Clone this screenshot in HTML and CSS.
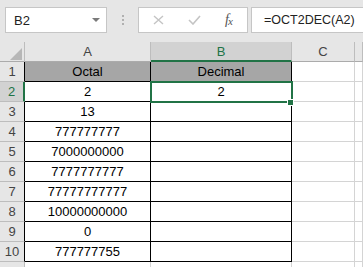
FILE: index.html
```html
<!DOCTYPE html>
<html lang="en">
<head>
    <meta charset="UTF-8">
    <title>OCT2DEC</title>
    <link rel="stylesheet" href="styles.css">
</head>
<body>
    <div class="toolbar">
        <div class="name-box">
            <span>B2</span>
            <span class="drop"></span>
        </div>
        <div class="grip"><i></i><i></i><i></i></div>
        <div class="fx-box">
            <svg class="icon-x" width="11" height="10" viewBox="0 0 11 10">
                <path d="M1 1 L10 9 M10 1 L1 9" stroke="#c4c4c4" stroke-width="1.4" fill="none"/>
            </svg>
            <svg class="icon-check" width="13" height="10" viewBox="0 0 13 10">
                <path d="M1 5 L5 9 L12 1" stroke="#c4c4c4" stroke-width="1.6" fill="none"/>
            </svg>
            <span class="fx">f<sub>x</sub></span>
        </div>
        <div class="formula">=OCT2DEC(A2)</div>
    </div>

    <div class="sheet">
        <div class="corner"><span class="tri"></span></div>
        <div class="col-head">A</div>
        <div class="col-head active">B</div>
        <div class="col-head">C</div>
        <div class="col-head"></div>

        <div class="row-head">1</div>
        <div class="cell tbl title">Octal</div>
        <div class="cell tbl title">Decimal</div>
        <div class="cell"></div>
        <div class="cell"></div>

        <div class="row-head active">2</div>
        <div class="cell tbl">2</div>
        <div class="cell tbl">2</div>
        <div class="cell"></div>
        <div class="cell"></div>

        <div class="row-head">3</div>
        <div class="cell tbl">13</div>
        <div class="cell tbl"></div>
        <div class="cell"></div>
        <div class="cell"></div>

        <div class="row-head">4</div>
        <div class="cell tbl">777777777</div>
        <div class="cell tbl"></div>
        <div class="cell"></div>
        <div class="cell"></div>

        <div class="row-head">5</div>
        <div class="cell tbl">7000000000</div>
        <div class="cell tbl"></div>
        <div class="cell"></div>
        <div class="cell"></div>

        <div class="row-head">6</div>
        <div class="cell tbl">7777777777</div>
        <div class="cell tbl"></div>
        <div class="cell"></div>
        <div class="cell"></div>

        <div class="row-head">7</div>
        <div class="cell tbl">77777777777</div>
        <div class="cell tbl"></div>
        <div class="cell"></div>
        <div class="cell"></div>

        <div class="row-head">8</div>
        <div class="cell tbl">10000000000</div>
        <div class="cell tbl"></div>
        <div class="cell"></div>
        <div class="cell"></div>

        <div class="row-head">9</div>
        <div class="cell tbl">0</div>
        <div class="cell tbl"></div>
        <div class="cell"></div>
        <div class="cell"></div>

        <div class="row-head">10</div>
        <div class="cell tbl">777777755</div>
        <div class="cell tbl"></div>
        <div class="cell"></div>
        <div class="cell"></div>

        <div class="row-head plain"></div>
        <div class="cell"></div>
        <div class="cell"></div>
        <div class="cell"></div>
        <div class="cell"></div>

        <div class="selection"><span class="handle"></span></div>
    </div>
</body>
</html>
```

FILE: styles.css
```css
html, body {
    margin: 0;
    padding: 0;
    background: #fff;
    font-family: 'Liberation Sans', Arial, sans-serif;
    overflow: hidden;
}

/* Formula bar */
.toolbar {
    display: flex;
    align-items: flex-start;
    height: 42px;
    padding: 7px 0 0 5px;
    box-sizing: border-box;
    background: #e6e6e6;
}

.name-box {
    display: flex;
    align-items: center;
    justify-content: space-between;
    width: 102px;
    height: 26px;
    box-sizing: border-box;
    padding: 0 6px 0 8px;
    background: #fff;
    border: 1px solid #c6c6c6;
    font-size: 13px;
    color: #222;
}

.drop {
    width: 0;
    height: 0;
    border-left: 4px solid transparent;
    border-right: 4px solid transparent;
    border-top: 4px solid #7a7a7a;
}

.grip {
    display: flex;
    flex-direction: column;
    gap: 2px;
    width: 31px;
    align-items: center;
    padding-top: 8px;
}

.grip i {
    display: block;
    width: 2px;
    height: 2px;
    background: #b0b0b0;
}

.fx-box {
    display: flex;
    align-items: center;
    width: 110px;
    height: 26px;
    box-sizing: border-box;
    padding-left: 14px;
    background: #fff;
    border: 1px solid #c6c6c6;
}

.icon-check {
    margin-left: 24px;
}

.fx {
    margin-left: 24px;
    font-family: 'Liberation Serif', serif;
    font-style: italic;
    font-size: 14px;
    color: #555;
    letter-spacing: -1px;
}

.fx sub {
    font-size: 11px;
    vertical-align: -1px;
}

.formula {
    flex: 1;
    height: 26px;
    margin-left: 3px;
    box-sizing: border-box;
    padding: 5px 0 0 12px;
    background: #fff;
    border: 1px solid #c6c6c6;
    border-right: none;
    font-size: 12.5px;
    color: #222;
}

/* Grid */
.sheet {
    position: relative;
    display: grid;
    grid-template-columns: 25px 126px 141px 63px 1fr;
    grid-auto-rows: 20px;
    font-size: 13px;
    color: #000;
}

.corner, .col-head, .row-head {
    background: #e6e6e6;
    color: #444;
    display: flex;
    align-items: center;
    justify-content: center;
    box-sizing: border-box;
    border-right: 1px solid #bdbdbd;
    border-bottom: 1px solid #ababab;
}

.corner {
    position: relative;
}

.tri {
    width: 0;
    height: 0;
    margin: 4px 0 0 8px;
    border-left: 12px solid transparent;
    border-bottom: 12px solid #b7b7b7;
}

.col-head.active {
    background: #d2d2d2;
    color: #217346;
    border-bottom: 2px solid #217346;
}

.row-head {
    border-bottom-color: #bdbdbd;
    border-right-color: #000;
}

.row-head.plain {
    border-right-color: #bdbdbd;
}

.row-head.active {
    background: #d2d2d2;
    color: #217346;
    border-right: 2px solid #217346;
}

.cell {
    display: flex;
    align-items: center;
    justify-content: center;
    box-sizing: border-box;
    border-right: 1px solid #d4d4d4;
    border-bottom: 1px solid #d4d4d4;
}

.cell.tbl {
    border-right-color: #000;
    border-bottom-color: #000;
}

.cell.title {
    background: #a6a6a6;
}

.selection {
    position: absolute;
    left: 150px;
    top: 39px;
    width: 143px;
    height: 22px;
    box-sizing: border-box;
    border: 2px solid #217346;
}

.handle {
    position: absolute;
    right: -2px;
    bottom: -4px;
    width: 5px;
    height: 5px;
    background: #217346;
    outline: 1px solid #fff;
}
```
